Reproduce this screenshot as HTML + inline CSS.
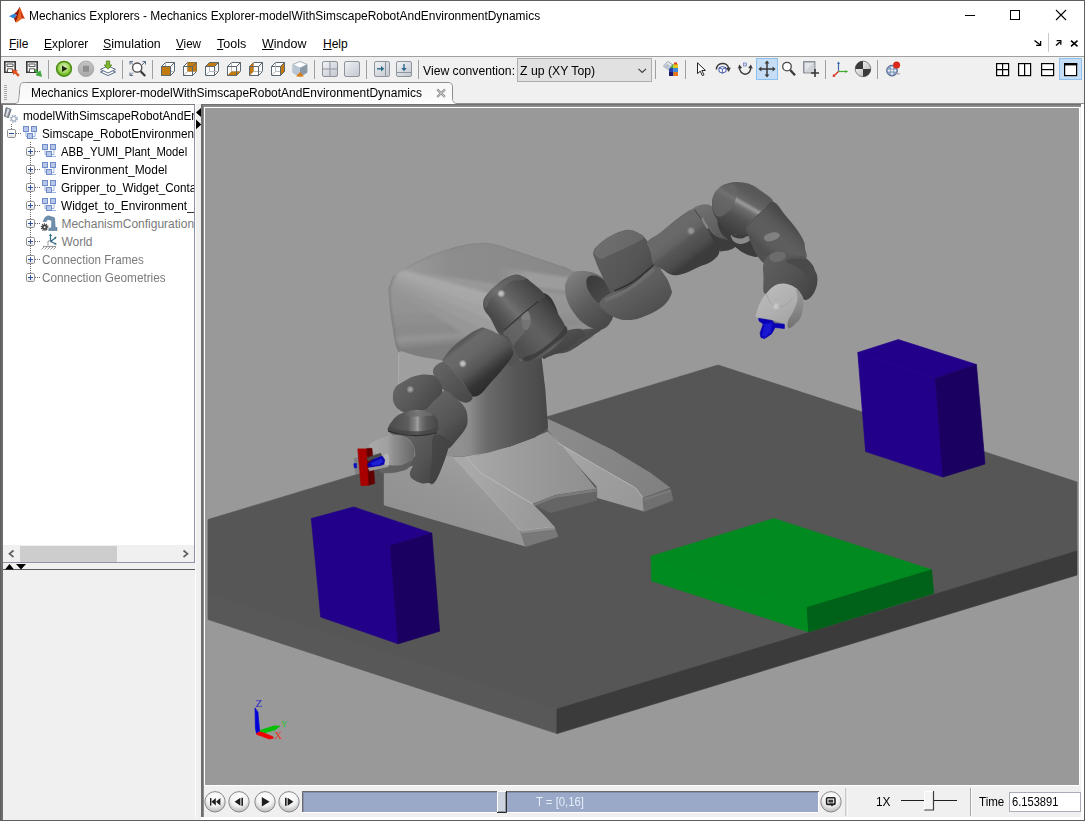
<!DOCTYPE html>
<html>
<head>
<meta charset="utf-8">
<title>Mechanics Explorers</title>
<style>
html,body{margin:0;padding:0;}
body{width:1085px;height:821px;position:relative;overflow:hidden;background:#f0f0f0;font-family:"Liberation Sans",sans-serif;font-size:12px;color:#000;}
.abs{position:absolute;}
.t{position:absolute;white-space:pre;line-height:14px;height:14px;transform-origin:0 50%;}
#titlebar{left:1px;top:1px;width:1083px;height:29px;background:#fff;}
#menubar{left:1px;top:30px;width:1083px;height:26px;background:#fff;}
#menuline{left:1px;top:56px;width:1083px;height:1px;background:#a0a0a0;}
#toolbar{left:1px;top:57px;width:1083px;height:47px;background:#f0f0f0;}
.sep{position:absolute;top:60px;width:1px;height:19px;background:#a0a0a0;}
u{text-decoration:underline;text-underline-offset:1px;}
/* tree */
#tree{left:3px;top:105px;width:191px;height:440px;background:#fff;overflow:hidden;}
.row{position:absolute;left:0;height:18px;}
.g{color:#7a7a7a;}
</style>
</head>
<body>
<!-- window border -->
<div class="abs" style="left:0;top:0;width:1085px;height:821px;background:#fff;"></div>
<div class="abs" style="left:0;top:0;width:1085px;height:1px;background:#5e5e5e;"></div>
<div class="abs" style="left:0;top:0;width:1px;height:821px;background:#5e5e5e;"></div>
<div class="abs" style="left:1084px;top:0;width:1px;height:821px;background:#5e5e5e;"></div>
<div class="abs" style="left:0;top:820px;width:1085px;height:1px;background:#5e5e5e;"></div>

<!-- TITLE BAR -->
<div id="titlebar" class="abs"></div>
<!--LOGO-->
<span class="t" id="title" style="left:29px;top:9px;transform:scaleX(0.994);">Mechanics Explorers - Mechanics Explorer-modelWithSimscapeRobotAndEnvironmentDynamics</span>
<!--WINCTRL-->

<!-- MENU BAR -->
<div id="menubar" class="abs"></div>
<span class="t" style="left:9px;top:37px;transform:scaleX(1.0);"><u>F</u>ile</span>
<span class="t" style="left:44px;top:37px;transform:scaleX(0.99);"><u>E</u>xplorer</span>
<span class="t" style="left:103px;top:37px;transform:scaleX(1.03);"><u>S</u>imulation</span>
<span class="t" style="left:176px;top:37px;transform:scaleX(0.97);"><u>V</u>iew</span>
<span class="t" style="left:217px;top:37px;transform:scaleX(1.045);"><u>T</u>ools</span>
<span class="t" style="left:262px;top:37px;transform:scaleX(1.04);"><u>W</u>indow</span>
<span class="t" style="left:323px;top:37px;transform:scaleX(1.0);"><u>H</u>elp</span>
<!--MENUICONS-->
<div id="menuline" class="abs"></div>

<!-- TOOLBAR -->
<div id="toolbar" class="abs"></div>
<!--TB-S-->
<svg class="abs" style="left:0;top:0" width="1085" height="104" viewBox="0 0 1085 104">
 <defs>
  <radialGradient id="gPlay" cx="0.5" cy="0.4" r="0.6"><stop offset="0" stop-color="#e4f6c8"/><stop offset="0.55" stop-color="#a4d860"/><stop offset="0.85" stop-color="#6cb828"/><stop offset="1" stop-color="#58a418"/></radialGradient>
  <linearGradient id="gStop" x1="0" y1="0" x2="0" y2="1"><stop offset="0" stop-color="#c4c4c4"/><stop offset="1" stop-color="#a8a8a8"/></linearGradient>
  <linearGradient id="gBtn" x1="0" y1="0" x2="1" y2="1"><stop offset="0" stop-color="#f4f5f7"/><stop offset="0.5" stop-color="#d9dce2"/><stop offset="1" stop-color="#c4c8cf"/></linearGradient>
  <linearGradient id="gTab" x1="0" y1="0" x2="0" y2="1"><stop offset="0" stop-color="#f7f7f9"/><stop offset="0.7" stop-color="#fbfbfc"/><stop offset="1" stop-color="#ffffff"/></linearGradient>
  <linearGradient id="gBall" x1="0" y1="0" x2="1" y2="1"><stop offset="0" stop-color="#ffffff"/><stop offset="1" stop-color="#b0b0b0"/></linearGradient>
  <g id="cube" fill="none" stroke="#5a6770" stroke-width="1">
   <path d="M0.5 4.5H9.5V13.5H0.5ZM0.5 4.5L4.5 0.5H13.5L9.5 4.5M13.5 0.5V9.5L9.5 13.5" fill="#fff"/>
   <path d="M4.5 0.5V9.5H13.5M4.5 9.5L0.5 13.5" stroke="#b4bcc2"/>
  </g>
 </defs>
 <!-- matlab logo -->
 <g>
  <path d="M9 16.2 L14.4 13.6 L17 15.2 L14 18.6 Z" fill="#2b86d9"/>
  <path d="M14.4 13.6 L16.8 11.6 L19.6 7 L20.2 11 L18 18 L15.6 22.4 L14 18.6 L17 15.2Z" fill="#8e1a0e"/>
  <path d="M19.6 7 C20.6 7.6 22.2 13 25 19 C23.2 17.8 22 18.4 20.8 19.4 C19 20.8 17.4 22.4 15.6 22.4 C17.6 19 18.8 12 19.6 7Z" fill="#e8641a"/>
  <path d="M20.2 9.2 C21 11.4 22.6 15.4 24.6 18.6 C23.4 18 22.4 18.2 21.6 18.8 C21.4 15.6 20.8 12 20.2 9.2Z" fill="#c8321e"/>
  <path d="M19.2 7.4L20 7.2L19.8 8.6Z" fill="#3a3f58"/>
 </g>
 <!-- window controls -->
 <g stroke="#000" stroke-width="1" fill="none">
  <path d="M965 15.5H975"/>
  <rect x="1010.5" y="10.5" width="9" height="9"/>
  <path d="M1056 10L1066 20M1066 10L1056 20" stroke-width="1.1"/>
 </g>
 <!-- menu right mini icons -->
 <g stroke="#000" stroke-width="1.4" fill="none">
  <path d="M1034.5 40.5L1040 44.8"/><path d="M1040.6 41V45.4H1036.2" stroke-width="1.3"/>
  <path d="M1056 45.5L1060 42"/><path d="M1056.6 40.6H1060.8V44.8" stroke-width="1.3"/>
  <path d="M1071 40.6L1077.5 46.4M1077.5 40.6L1071 46.4" stroke-width="1.5"/>
 </g>
 <rect x="1048" y="33" width="1" height="19" fill="#c8c8c8"/>
 <!-- separators -->
 <g fill="#a0a0a0">
  <rect x="48" y="60" width="1" height="19"/><rect x="122" y="60" width="1" height="19"/><rect x="152" y="60" width="1" height="19"/>
  <rect x="314" y="60" width="1" height="19"/><rect x="366" y="60" width="1" height="19"/><rect x="418" y="60" width="1" height="19"/>
  <rect x="655" y="60" width="1" height="19"/><rect x="685" y="60" width="1" height="19"/><rect x="825" y="60" width="1" height="19"/><rect x="877" y="60" width="1" height="19"/>
 </g>
 <!-- icon 1,2: model blocks with arrows -->
 <g id="mdl1">
  <path d="M4.8 61.8H15.2V72.2H4.8Z" fill="#f4f4f4" stroke="#3a3a3a" stroke-width="1.6"/>
  <path d="M7 64H13V66.5H7Z" fill="#fff" stroke="#5a5a5a" stroke-width="1"/>
  <path d="M7.5 72V68.8H12.5V72" fill="#fff" stroke="#5a5a5a" stroke-width="1"/>
  <path d="M12.2 69.8L17.4 70.6L16.2 71.8L19.4 75L18 76.4L14.8 73.2L13.4 74.6Z" fill="#e8541a" stroke="#c03a10" stroke-width="0.5"/>
 </g>
 <g>
  <path d="M26.8 61.8H37.2V72.2H26.8Z" fill="#f4f4f4" stroke="#3a3a3a" stroke-width="1.6"/>
  <path d="M29 64H35V66.5H29Z" fill="#fff" stroke="#5a5a5a" stroke-width="1"/>
  <path d="M29.5 72V68.8H34.5V72" fill="#fff" stroke="#5a5a5a" stroke-width="1"/>
  <path d="M34 70.6L35.6 69.2L38.6 72.2L40.2 70.8L41.6 76.4L36 75L37.4 73.6Z" fill="#3fae3a" stroke="#228a24" stroke-width="0.5"/>
 </g>
 <!-- play / stop -->
 <circle cx="64" cy="68.8" r="7.4" fill="url(#gPlay)" stroke="#4a8c14" stroke-width="1.5"/>
 <path d="M62 65.6L67.4 68.8L62 72Z" fill="#1e2a10"/>
 <circle cx="86" cy="68.8" r="7.8" fill="url(#gStop)" stroke="#a2a2a2" stroke-width="0.8"/>
 <rect x="83" y="65.8" width="6" height="6" fill="#8e8e8e"/>
 <!-- layers / update -->
 <g>
  <path d="M100.5 72L108 68.6L115.5 72L108 75.6Z" fill="#fff" stroke="#5a6e86" stroke-width="1"/>
  <path d="M100.5 69.4L108 66L115.5 69.4L108 73Z" fill="#fff" stroke="#5a6e86" stroke-width="1"/>
  <path d="M106.4 61H109.6V65H111.8L108 69.2L104.2 65H106.4Z" fill="#7fb82e" stroke="#4c8216" stroke-width="0.8"/>
 </g>
 <!-- zoom fit -->
 <g fill="none">
  <path d="M130 61.5L133.5 65M130 61.5H133M130 61.5V64.5M145.5 61.5L142 65M145.5 61.5H142.5M145.5 61.5V64.5M130 75.5L133 72.5M130 75.5H133M130 75.5V72.5" stroke="#5a6e86" stroke-width="1"/>
  <circle cx="137.2" cy="67.6" r="4.6" fill="#fff" stroke="#4a4a4a" stroke-width="1.3"/>
  <path d="M140.6 71.2L145.2 76" stroke="#3a3a3a" stroke-width="2.2"/>
 </g>
 <!-- cubes -->
 <use href="#cube" x="161" y="62"/><path d="M161.5 66.5H170.5V75.5H161.5Z" fill="#c27a0e" stroke="#5a6770"/>
 <use href="#cube" x="183" y="62"/><path d="M187.5 62.5H196.5V71.5H187.5Z" fill="#c27a0e"/><path d="M183.5 66.5H192.5V75.5H183.5ZM192.5 66.5L196.5 62.5M183.5 66.5L187.5 62.5" fill="none" stroke="#5a6770"/>
 <use href="#cube" x="205" y="62"/><path d="M205.5 66.5L209.5 62.5H218.5L214.5 66.5Z" fill="#c27a0e" stroke="#5a6770"/>
 <use href="#cube" x="227" y="62"/><path d="M227.5 75.5L231.5 71.5H240.5L236.5 75.5Z" fill="#c27a0e"/><path d="M227.5 66.5H236.5V75.5H227.5Z" fill="none" stroke="#5a6770"/>
 <use href="#cube" x="249" y="62"/><path d="M249.5 66.5L253.5 62.5V71.5L249.5 75.5Z" fill="#c27a0e"/><path d="M249.5 66.5H258.5V75.5H249.5Z" fill="none" stroke="#5a6770"/>
 <use href="#cube" x="271" y="62"/><path d="M280.5 66.5L284.5 62.5V71.5L280.5 75.5Z" fill="#c27a0e" stroke="#5a6770"/>
 <!-- iso cube -->
 <g>
  <path d="M300 61.5L307 64.5V72.5L300 76.5L293 72.5V64.5Z" fill="#dfe6ee" stroke="#8a97a6" stroke-width="0.8"/>
  <path d="M300 61.5L307 64.5L300 68L293 64.5Z" fill="#fdfdfd" stroke="#9aa6b4" stroke-width="0.6"/>
  <path d="M300 68V76.5L293 72.5V64.5Z" fill="#b9c6d6"/>
  <path d="M300 68V76.5L307 72.5V64.5Z" fill="#8c99a8"/>
  <path d="M296 76.5L300 72L304 76.5Z" fill="#d97a14"/>
 </g>
 <!-- grid / single -->
 <rect x="322.5" y="61.5" width="15" height="15" rx="1.5" fill="url(#gBtn)" stroke="#8e949c"/>
 <path d="M330 62V76M323 69H337" stroke="#8e949c" stroke-width="1"/>
 <rect x="344.5" y="61.5" width="15" height="15" rx="1.5" fill="url(#gBtn)" stroke="#8e949c"/>
 <!-- arrows right/down -->
 <rect x="374.5" y="61.5" width="15" height="15" rx="1.5" fill="url(#gBtn)" stroke="#8e949c"/>
 <path d="M385.5 62V76" stroke="#8e949c"/><path d="M377 68.8H383" stroke="#2a6a8a" stroke-width="1.4"/><path d="M381 66L384.2 68.8L381 71.6Z" fill="#2a6a8a"/>
 <rect x="396.5" y="61.5" width="15" height="15" rx="1.5" fill="url(#gBtn)" stroke="#8e949c"/>
 <path d="M397 72.5H411" stroke="#8e949c"/><path d="M404 64V70" stroke="#2a6a8a" stroke-width="1.4"/><path d="M401.2 68L404 71.2L406.8 68Z" fill="#2a6a8a"/>
 <!-- combo -->
 <rect x="517.5" y="58.5" width="134" height="23" fill="#e1e1e1" stroke="#adadad"/>
 <path d="M638.5 68.8L642.2 72.4L646 68.8" fill="none" stroke="#3a3a3a" stroke-width="1.1"/>
 <!-- color icon -->
 <g>
  <rect x="669" y="64" width="4.5" height="4" fill="#3fae3a"/><rect x="673.5" y="64" width="4.5" height="4" fill="#e8c81a"/>
  <rect x="669" y="68" width="4.5" height="4" fill="#2a3fae"/><rect x="673.5" y="68" width="4.5" height="4" fill="#3a8ad9"/>
  <rect x="669" y="72" width="4.5" height="4" fill="#1a1a6a"/><rect x="673.5" y="72" width="4.5" height="4" fill="#e8741a"/>
  <rect x="674" y="62.5" width="3" height="2" fill="#d93a2a"/>
  <path d="M663.4 66.2L667.6 61.4L672.6 64.6L668.4 69.6Z" fill="#e4e8ee" stroke="#8a97a6" stroke-width="0.8"/>
  <path d="M664.6 66.4L666.8 63.8L670.2 66L668.2 68.6Z" fill="#b4c0ce"/>
 </g>
 <!-- pointer -->
 <path d="M697.5 62.8V73.6L700.2 71.2L702.4 75.6L704 74.8L701.8 70.6L705.4 70.4Z" fill="#fff" stroke="#222" stroke-width="1"/>
 <!-- rotate -->
 <g fill="none">
  <path d="M716.4 69.6C716.4 61.6 728 61.4 728.6 68.6" stroke="#3a3a3a" stroke-width="1.5"/>
  <path d="M726 68L728.8 72L730.8 67.4Z" fill="#3a3a3a"/>
  <path d="M722.4 66.6L726 67.8V71.6L722.4 73.2L719 71.6V67.8Z" fill="#fff" stroke="#2a3f9e" stroke-width="0.9"/>
  <path d="M719 67.8L722.4 69.2L726 67.8M722.4 69.2V73.2" stroke="#2a3f9e" stroke-width="0.8"/>
 </g>
 <!-- roll -->
 <g fill="none">
  <path d="M739.6 66.6C739 76.8 751.6 76.6 750.6 66.8" stroke="#3a3a3a" stroke-width="1.5"/>
  <path d="M737.8 68.6L739.4 64.4L742.2 68Z M748.2 68L750.8 64.4L752.8 68.6Z" fill="#3a3a3a"/>
  <rect x="743.5" y="63" width="3" height="3" fill="#c8d4f0" stroke="#6a7ab8" stroke-width="0.7"/>
 </g>
 <!-- pan selected -->
 <rect x="756.5" y="58.5" width="21" height="21" fill="#c5def5" stroke="#8cc0ee"/>
 <g stroke="#3a3a3a" stroke-width="1.5" fill="none"><path d="M767 62V76M760 69H774"/></g>
 <path d="M764.6 63.4L767 60.4L769.4 63.4ZM764.6 74.6L767 77.6L769.4 74.6ZM761.4 66.6L758.4 69L761.4 71.4ZM772.6 66.6L775.6 69L772.6 71.4Z" fill="#3a3a3a"/>
 <!-- zoom -->
 <circle cx="787" cy="66.6" r="4.3" fill="#fff" stroke="#4a4a4a" stroke-width="1.3"/>
 <path d="M790.2 70L795 75.2" stroke="#3a3a3a" stroke-width="2.4"/>
 <!-- zoom box -->
 <rect x="803.8" y="61.8" width="11" height="11" fill="#e2e5ea" stroke="#6a7079" stroke-width="1.1"/>
 <path d="M804.4 71.8L814 62.4H814.4V72.4H804.4Z" fill="#cfd3da"/>
 <path d="M815 69V77M811 73H819" stroke="#3a3a3a" stroke-width="1.6"/>
 <!-- axes -->
 <g fill="none">
  <path d="M838.5 62V71.5" stroke="#3f6aa8" stroke-width="1.2"/><path d="M837 64L838.5 61.4L840 64Z" fill="#3f6aa8"/>
  <path d="M838.5 71.5H846" stroke="#3fae2a" stroke-width="1.2"/><path d="M845.4 70L848.2 71.5L845.4 73Z" fill="#3fae2a"/>
  <path d="M838.5 71.5L834 75.8" stroke="#d9301a" stroke-width="1.2"/><path d="M833 74L832.6 77L835.6 76.4Z" fill="#d9301a"/>
 </g>
 <!-- CG ball -->
 <circle cx="863" cy="68.9" r="7.8" fill="url(#gBall)" stroke="#6a6a6a" stroke-width="0.8"/>
 <path d="M863 68.9V61.1A7.8 7.8 0 0 0 855.2 68.9Z" fill="#3a3a3a"/><path d="M863 68.9V76.7A7.8 7.8 0 0 0 870.8 68.9Z" fill="#3a3a3a"/>
 <!-- movie -->
 <g>
  <circle cx="892" cy="70.6" r="5.4" fill="#8aa0c0" stroke="#4a5f86" stroke-width="0.9"/>
  <circle cx="892" cy="70.6" r="1" fill="#fff"/><circle cx="892" cy="67.6" r="1.2" fill="#e8eef8"/><circle cx="892" cy="73.6" r="1.2" fill="#e8eef8"/><circle cx="889" cy="70.6" r="1.2" fill="#e8eef8"/><circle cx="895" cy="70.6" r="1.2" fill="#e8eef8"/>
  <path d="M896 73.4C897.6 74.6 898.6 73.4 899.8 73.8" stroke="#8a8a8a" stroke-width="1" fill="none"/>
  <circle cx="896.6" cy="65" r="3.5" fill="#d9281a"/>
 </g>
 <!-- layout icons -->
 <g fill="#fff" stroke="#000" stroke-width="1.2">
  <rect x="996.6" y="63.6" width="12" height="12"/><path d="M1002.6 63.6V75.6M996.6 69.6H1008.6" fill="none"/>
  <rect x="1018.6" y="63.6" width="12" height="12"/><path d="M1024.6 63.6V75.6" fill="none"/>
  <rect x="1041.6" y="63.6" width="12" height="12"/><path d="M1041.6 69.6H1053.6" fill="none"/>
 </g>
 <rect x="1059.5" y="58.5" width="22" height="21" fill="#c5def5" stroke="#8cc0ee"/>
 <rect x="1064.6" y="63.6" width="12" height="12" fill="#fff" stroke="#000" stroke-width="1.2"/><rect x="1064" y="63" width="13.2" height="2.4" fill="#000"/>
 <!-- tab -->
 <g fill="#a8a8a8"><rect x="4" y="85" width="3" height="1"/><rect x="4" y="87" width="3" height="1"/><rect x="4" y="89" width="3" height="1"/><rect x="4" y="91" width="3" height="1"/><rect x="4" y="93" width="3" height="1"/><rect x="4" y="95" width="3" height="1"/><rect x="4" y="97" width="3" height="1"/><rect x="4" y="99" width="3" height="1"/></g>
 <path d="M1 103.5H15C18.5 103.5 18.5 101 19 98L20 87C20.3 83.6 21.5 82.5 24.5 82.5H448C451 82.5 452.5 84 452.5 87V98C452.5 101.5 453.5 103.5 457 103.5H1084" fill="none" stroke="#8e8e8e" stroke-width="1"/>
 <path d="M15 104C18.8 104 19 101 19.5 98L20.5 87C20.8 84 21.8 83 24.5 83H448C450.6 83 452 84.4 452 87V98C452 101.8 453.2 104 457 104Z" fill="url(#gTab)"/>
 <path d="M437.2 89.4L445 97M445 89.4L437.2 97" stroke="#8a8a8a" stroke-width="2.2" fill="none"/>
 <path d="M437.2 89.4L445 97M445 89.4L437.2 97" stroke="#e8e8e8" stroke-width="0.7" fill="none"/>
</svg>
<span class="t" style="left:423px;top:64px;transform:scaleX(1.017);">View convention:</span>
<span class="t" style="left:520px;top:64px;transform:scaleX(1.02);">Z up (XY Top)</span>
<span class="t" style="left:31px;top:86px;transform:scaleX(0.997);">Mechanics Explorer-modelWithSimscapeRobotAndEnvironmentDynamics</span>
<!--TB-E-->

<!-- LEFT PANEL -->
<!--LEFT-S-->
<div class="abs" style="left:1px;top:104px;width:200px;height:716px;background:#f0f0f0;"></div>
<div class="abs" style="left:1px;top:104px;width:2px;height:716px;background:#6d6d6d;"></div>
<div class="abs" style="left:1px;top:104px;width:194px;height:1px;background:#7a7a7a;"></div>
<div class="abs" style="left:194px;top:105px;width:1px;height:458px;background:#8e94a3;"></div>
<div class="abs" style="left:3px;top:562px;width:192px;height:1px;background:#8e94a3;"></div>
<div class="abs" style="left:195px;top:104px;width:1px;height:714px;background:#fcfcfc;"></div>
<div class="abs" style="left:3px;top:569px;width:192px;height:1px;background:#5a5a5a;"></div>
<div id="tree" class="abs">
<svg class="abs" style="left:0;top:0" width="191" height="440" viewBox="3 105 191 440">
 <defs>
  <g id="hier">
   <path d="M3 5.5V10.5H6M12 5.5V10.5H10M10 12.5H14" fill="none" stroke="#9db3e0" stroke-width="1"/>
   <rect x="0.5" y="0.5" width="5" height="5" fill="#b7c7ea" stroke="#6f8bc9"/>
   <rect x="8.5" y="0.5" width="5" height="5" fill="#b7c7ea" stroke="#6f8bc9"/>
   <rect x="4.5" y="7.5" width="5" height="5" fill="#b7c7ea" stroke="#6f8bc9"/>
  </g>
  <g id="plus">
   <rect x="0.5" y="0.5" width="8" height="8" rx="1.2" fill="#fff" stroke="#8f8f8f"/>
   <rect x="1.5" y="5.5" width="6" height="2.5" fill="#e6e6e6"/>
   <path d="M2 4.5H7M4.5 2V7" stroke="#2c4f9e" stroke-width="1" fill="none"/>
  </g>
  <g id="minus">
   <rect x="0.5" y="0.5" width="8" height="8" rx="1.2" fill="#fff" stroke="#8f8f8f"/>
   <rect x="1.5" y="5.5" width="6" height="2.5" fill="#e6e6e6"/>
   <path d="M2 4.5H7" stroke="#2c4f9e" stroke-width="1" fill="none"/>
  </g>
 </defs>
 <!-- dotted connectors -->
 <g stroke="#6a6a6a" stroke-width="1" stroke-dasharray="1 1" fill="none">
  <path d="M11.5 124V129"/>
  <path d="M16 133.5H22"/>
  <path d="M30.5 142V273"/>
  <path d="M35 151.5H41M35 169.5H41M35 187.5H41M35 205.5H41M35 223.5H41M35 241.5H41M35 259.5H41M35 277.5H41"/>
 </g>
 <!-- row0 icon: pen + gear -->
 <g>
  <path d="M6.2 107.6 L11.2 109.4 L8.4 117.6 L4.4 116.2 Z" fill="#8d949c" stroke="#5c636b" stroke-width="0.8"/>
  <path d="M7.6 108.6 L9.4 109.3 L7 116.4 L5.6 115.9Z" fill="#dfe3e8"/>
  <circle cx="13.8" cy="118.8" r="3.1" fill="none" stroke="#a9b6c6" stroke-width="2.2" stroke-dasharray="1.4 1.05"/>
  <circle cx="13.8" cy="118.8" r="2.2" fill="#fff" stroke="#8c99aa" stroke-width="0.9"/>
 </g>
 <use href="#minus" x="7" y="129"/>
 <use href="#hier" x="23" y="126"/>
 <use href="#plus" x="26" y="147"/><use href="#hier" x="42" y="144"/>
 <use href="#plus" x="26" y="165"/><use href="#hier" x="42" y="162"/>
 <use href="#plus" x="26" y="183"/><use href="#hier" x="42" y="180"/>
 <use href="#plus" x="26" y="201"/><use href="#hier" x="42" y="198"/>
 <use href="#plus" x="26" y="219"/>
 <use href="#plus" x="26" y="237"/>
 <use href="#plus" x="26" y="255"/>
 <use href="#plus" x="26" y="273"/>
 <!-- mechanism icon -->
 <g>
  <path d="M43.2 221.5 L45 217.5 L48 215.8 L54.5 217.8 L55.2 227.5 L57 227.5 L57 230.5 L48.6 230.5 L49 228.6 L51.6 227.5 L51.8 220.4 L47.6 219.2 L46.2 221.6 Z" fill="#6f90ad" stroke="#4f7190" stroke-width="0.6"/>
  <circle cx="44.6" cy="227.2" r="2.6" fill="#3c3c3c"/>
  <circle cx="44.6" cy="227.2" r="3.2" fill="none" stroke="#3c3c3c" stroke-width="1.3" stroke-dasharray="1.1 0.9"/>
  <circle cx="44.6" cy="227.2" r="1" fill="#fff"/>
 </g>
 <!-- world icon -->
 <g fill="none">
  <path d="M48 245.5V241H52.5" stroke="#9a9a9a" stroke-width="1"/>
  <path d="M43 246.5H56" stroke="#9a9a9a" stroke-width="1.2"/>
  <path d="M44 247 L41.5 249.5M47 247L44.5 249.5M50 247L47.5 249.5M53 247L50.5 249.5M56 247L53.5 249.5" stroke="#9a9a9a" stroke-width="1"/>
  <path d="M50.5 241.5V234.5M50.5 241.5L56 237.5M50.5 241.5L56 244" stroke="#2f6a86" stroke-width="1.2"/>
  <path d="M49 236L50.5 233.4L52 236ZM54.2 237L56.6 236.8L55.6 239ZM54.2 244.4L56.8 244.6L55.6 242.4Z" fill="#2f6a86" stroke="none"/>
 </g>
</svg>
<span class="t" style="left:20px;top:4px;transform:scaleX(0.986);">modelWithSimscapeRobotAndEnvironmentDynamics</span>
<span class="t" style="left:38.5px;top:22px;transform:scaleX(0.978);">Simscape_RobotEnvironmentDynamics</span>
<span class="t" style="left:58.4px;top:40px;transform:scaleX(0.941);">ABB_YUMI_Plant_Model</span>
<span class="t" style="left:58.4px;top:58px;transform:scaleX(0.995);">Environment_Model</span>
<span class="t" style="left:58.4px;top:76px;transform:scaleX(0.97);">Gripper_to_Widget_Contact</span>
<span class="t" style="left:58.4px;top:94px;transform:scaleX(0.985);">Widget_to_Environment_Contact</span>
<span class="t g" style="left:58.4px;top:112px;transform:scaleX(1.0);">MechanismConfiguration</span>
<span class="t g" style="left:58.4px;top:130px;transform:scaleX(1.0);">World</span>
<span class="t g" style="left:39px;top:148px;transform:scaleX(0.972);">Connection Frames</span>
<span class="t g" style="left:39px;top:166px;transform:scaleX(0.981);">Connection Geometries</span>
</div>
<!-- h scrollbar -->
<div class="abs" style="left:3px;top:546px;width:191px;height:16px;background:#f0f0f0;"></div>
<div class="abs" style="left:20px;top:546px;width:97px;height:16px;background:#cdcdcd;"></div>
<svg class="abs" style="left:3px;top:546px" width="191" height="16" viewBox="3 546 191 16"><path d="M13.5 550.5L9.5 553.8L13.5 557" fill="none" stroke="#606060" stroke-width="1.7"/><path d="M183.5 550.5L187.5 553.8L183.5 557" fill="none" stroke="#606060" stroke-width="1.7"/></svg>
<!-- collapse arrows -->
<svg class="abs" style="left:3px;top:563px" width="30" height="7" viewBox="3 563 30 7"><path d="M5 569.5L9.5 564L14 569.5Z M16 564L26 564L21 569.5Z" fill="#000"/></svg>
<!-- divider arrows -->
<svg class="abs" style="left:196px;top:106px" width="6" height="24" viewBox="196 106 6 24"><path d="M201.3 107.8L196 112.5L201.3 117.2Z M196 119.6L201.3 124.4L196 129.2Z" fill="#000"/></svg>
<!--LEFT-E-->

<!-- 3D VIEW -->
<!--VIEW-S-->
<!-- frame -->
<div class="abs" style="left:201px;top:104px;width:883px;height:716px;background:#f0f0f0;"></div>
<div class="abs" style="left:201px;top:104px;width:881px;height:1px;background:#6e6e6e;"></div>
<div class="abs" style="left:202px;top:105px;width:879px;height:2px;background:#8a8a8a;"></div>
<div class="abs" style="left:201px;top:104px;width:2px;height:715px;background:#6e6e6e;"></div>
<div class="abs" style="left:203px;top:105px;width:1px;height:713px;background:#8c8c8c;"></div>
<div class="abs" style="left:204px;top:107px;width:877px;height:679px;background:#fff;"></div>
<div class="abs" style="left:1081px;top:104px;width:3px;height:716px;background:#fff;"></div>
<div class="abs" style="left:1080px;top:108px;width:1px;height:677px;background:#f2f2f2;"></div>
<div class="abs" style="left:201px;top:817px;width:883px;height:3px;background:#fff;"></div>
<svg class="abs" id="scene" style="left:205px;top:108px" width="874" height="677" viewBox="205 108 874 677">
<rect x="205" y="108" width="874" height="677" fill="#999999"/>
<!--SC-S-->
<defs><linearGradient id="gRF" gradientUnits="userSpaceOnUse" x1="560" y1="440" x2="640" y2="500"><stop offset="0" stop-color="#8c8c8c"/><stop offset="1" stop-color="#868686"/></linearGradient><linearGradient id="gRFt" gradientUnits="userSpaceOnUse" x1="550" y1="430" x2="670" y2="490"><stop offset="0" stop-color="#8c8c8c"/><stop offset="1" stop-color="#808080"/></linearGradient><linearGradient id="gRFi" gradientUnits="userSpaceOnUse" x1="560" y1="440" x2="640" y2="500"><stop offset="0" stop-color="#aaaaaa"/><stop offset="0.5" stop-color="#9e9e9e"/><stop offset="1" stop-color="#989898"/></linearGradient><linearGradient id="gSk" gradientUnits="userSpaceOnUse" x1="470" y1="470" x2="600" y2="470"><stop offset="0" stop-color="#a8a8a8"/><stop offset="0.4" stop-color="#9c9c9c"/><stop offset="1" stop-color="#8e8e8e"/></linearGradient><linearGradient id="gLFl" gradientUnits="userSpaceOnUse" x1="400" y1="520" x2="440" y2="440"><stop offset="0" stop-color="#909090"/><stop offset="0.6" stop-color="#979797"/><stop offset="1" stop-color="#a0a0a0"/></linearGradient><linearGradient id="gLFr" gradientUnits="userSpaceOnUse" x1="470" y1="480" x2="540" y2="500"><stop offset="0" stop-color="#a8a8a8"/><stop offset="1" stop-color="#9a9a9a"/></linearGradient><linearGradient id="gCol" gradientUnits="userSpaceOnUse" x1="462" y1="400" x2="548" y2="400"><stop offset="0" stop-color="#909090"/><stop offset="0.09" stop-color="#8c8c8c"/><stop offset="0.2" stop-color="#787878"/><stop offset="0.3" stop-color="#6a6a6a"/><stop offset="0.465" stop-color="#606060"/><stop offset="0.63" stop-color="#565656"/><stop offset="0.85" stop-color="#4e4e4e"/><stop offset="1" stop-color="#464646"/></linearGradient><clipPath id="cTor"><path d="M397.6 350.3C394.9 344.0 394.9 342.5 392.6 327.8C390.3 313.1 389.5 306.9 388.8 295.2C388.1 283.5 388.4 289.6 390.1 283.9C391.8 278.2 391.1 278.2 395.1 273.9C399.1 269.6 397.1 271.9 405.1 267.6C413.1 263.3 414.4 262.3 425.1 257.6C435.8 252.9 434.5 253.6 445.2 250.1C455.9 246.6 455.8 246.5 465.2 244.6C474.6 242.7 473.6 243.4 480.3 243.1C487.0 242.8 482.3 241.8 490.3 243.3C498.3 244.8 499.0 245.3 510.4 248.8C521.8 252.3 520.9 252.3 532.9 256.3C544.9 260.3 545.5 260.4 555.5 263.9C565.5 267.4 561.8 264.4 570.5 269.4C579.2 274.4 581.3 273.8 588.0 282.7C594.7 291.6 593.6 290.0 595.6 302.7C597.6 315.4 599.0 319.6 595.6 330.3C592.2 341.0 590.4 337.5 583.0 342.8C575.6 348.1 576.7 347.0 568.0 350.3C559.3 353.6 557.2 353.6 550.5 355.3C543.8 357.0 553.6 355.2 542.9 356.6C532.2 358.0 528.4 358.1 510.4 360.4C492.4 362.7 493.4 365.4 475.3 365.4C457.2 365.4 457.4 362.7 442.7 360.4C428.0 358.1 430.8 358.9 420.1 356.6C409.4 354.3 408.6 353.3 402.6 351.6C396.6 349.9 400.3 356.6 397.6 350.3Z"/></clipPath><filter id="fB" x="-5%" y="-5%" width="110%" height="110%"><feGaussianBlur stdDeviation="1.6"/></filter><linearGradient id="gTop" gradientUnits="userSpaceOnUse" x1="405" y1="0" x2="575" y2="0"><stop offset="0" stop-color="#9a9a9a"/><stop offset="0.27" stop-color="#8d8d8d"/><stop offset="1" stop-color="#888888"/></linearGradient><linearGradient id="gW0" gradientUnits="userSpaceOnUse" x1="389" y1="0" x2="575" y2="0"><stop offset="0" stop-color="#a9a9a9"/><stop offset="0.62" stop-color="#a9a9a9"/><stop offset="0.85" stop-color="#a9a9a9" stop-opacity="0"/></linearGradient><linearGradient id="gW1" gradientUnits="userSpaceOnUse" x1="389" y1="0" x2="575" y2="0"><stop offset="0" stop-color="#a7a7a7"/><stop offset="0.62" stop-color="#a7a7a7"/><stop offset="0.85" stop-color="#a7a7a7" stop-opacity="0"/></linearGradient><linearGradient id="gW2" gradientUnits="userSpaceOnUse" x1="389" y1="0" x2="575" y2="0"><stop offset="0" stop-color="#a2a2a2"/><stop offset="0.62" stop-color="#a2a2a2"/><stop offset="0.85" stop-color="#a2a2a2" stop-opacity="0"/></linearGradient><linearGradient id="gW3" gradientUnits="userSpaceOnUse" x1="389" y1="0" x2="575" y2="0"><stop offset="0" stop-color="#9c9c9c"/><stop offset="0.62" stop-color="#9c9c9c"/><stop offset="0.85" stop-color="#9c9c9c" stop-opacity="0"/></linearGradient><linearGradient id="gW4" gradientUnits="userSpaceOnUse" x1="389" y1="0" x2="575" y2="0"><stop offset="0" stop-color="#979797"/><stop offset="0.62" stop-color="#979797"/><stop offset="0.85" stop-color="#979797" stop-opacity="0"/></linearGradient><linearGradient id="gRE" gradientUnits="userSpaceOnUse" x1="498" y1="0" x2="528" y2="0"><stop offset="0" stop-color="#a0a0a0" stop-opacity="0"/><stop offset="1" stop-color="#a0a0a0" stop-opacity="0.85"/></linearGradient><linearGradient id="gUnd" gradientUnits="userSpaceOnUse" x1="560" y1="340" x2="575" y2="360"><stop offset="0" stop-color="#5a5a5a"/><stop offset="1" stop-color="#3e3e3e"/></linearGradient><linearGradient id="gUnd2" gradientUnits="userSpaceOnUse" x1="560" y1="335" x2="570" y2="355"><stop offset="0" stop-color="#505050"/><stop offset="1" stop-color="#3e3e3e"/></linearGradient><linearGradient id="gR1" gradientUnits="userSpaceOnUse" x1="560" y1="270" x2="610" y2="330"><stop offset="0" stop-color="#8a8a8a"/><stop offset="0.25" stop-color="#757575"/><stop offset="0.55" stop-color="#5d5d5d"/><stop offset="1" stop-color="#434343"/></linearGradient><linearGradient id="gR1h" gradientUnits="userSpaceOnUse" x1="585" y1="275" x2="610" y2="300"><stop offset="0" stop-color="#393939"/><stop offset="1" stop-color="#4b4b4b"/></linearGradient><linearGradient id="gR3" gradientUnits="userSpaceOnUse" x1="600" y1="250" x2="650" y2="285"><stop offset="0" stop-color="#5d5d5d"/><stop offset="0.6" stop-color="#555555"/><stop offset="1" stop-color="#474747"/></linearGradient><linearGradient id="gR3c" gradientUnits="userSpaceOnUse" x1="600" y1="235" x2="640" y2="260"><stop offset="0" stop-color="#6f6f6f"/><stop offset="1" stop-color="#656565"/></linearGradient><linearGradient id="gR2" gradientUnits="userSpaceOnUse" x1="620" y1="280" x2="650" y2="325"><stop offset="0" stop-color="#676767"/><stop offset="0.5" stop-color="#595959"/><stop offset="1" stop-color="#4b4b4b"/></linearGradient><linearGradient id="gR4" gradientUnits="userSpaceOnUse" x1="667.4" y1="224.3" x2="693.7" y2="259.4"><stop offset="0" stop-color="#5e5e5e"/><stop offset="0.08" stop-color="#6a6a6a"/><stop offset="0.3" stop-color="#696969"/><stop offset="0.48" stop-color="#626262"/><stop offset="0.56" stop-color="#575757"/><stop offset="0.8" stop-color="#4e4e4e"/><stop offset="0.93" stop-color="#444444"/><stop offset="1" stop-color="#3c3c3c"/></linearGradient><radialGradient id="gH1" gradientUnits="userSpaceOnUse" cx="691.0" cy="230.9" r="4.5"><stop offset="0" stop-color="#a4a4a4"/><stop offset="0.35" stop-color="#a4a4a4"/><stop offset="1" stop-color="#a4a4a400"/></radialGradient><linearGradient id="gR5" gradientUnits="userSpaceOnUse" x1="700" y1="205" x2="730" y2="250"><stop offset="0" stop-color="#717171"/><stop offset="0.5" stop-color="#616161"/><stop offset="1" stop-color="#4f4f4f"/></linearGradient><linearGradient id="gR6" gradientUnits="userSpaceOnUse" x1="736.5" y1="182.3" x2="707.1" y2="233.5"><stop offset="0" stop-color="#585858"/><stop offset="0.1" stop-color="#5e5e5e"/><stop offset="0.2" stop-color="#686868"/><stop offset="0.255" stop-color="#9c9c9c"/><stop offset="0.33" stop-color="#6c6c6c"/><stop offset="0.5" stop-color="#525252"/><stop offset="0.75" stop-color="#404040"/><stop offset="1" stop-color="#383838"/></linearGradient><linearGradient id="gR7" gradientUnits="userSpaceOnUse" x1="748.7" y1="235.9" x2="773.9" y2="207.2"><stop offset="0" stop-color="#505050"/><stop offset="0.2" stop-color="#5c5c5c"/><stop offset="0.5" stop-color="#5e5e5e"/><stop offset="0.75" stop-color="#585858"/><stop offset="1" stop-color="#4a4a4a"/></linearGradient><linearGradient id="gR8" gradientUnits="userSpaceOnUse" x1="770" y1="265" x2="815" y2="295"><stop offset="0" stop-color="#5c5c5c"/><stop offset="0.5" stop-color="#525252"/><stop offset="1" stop-color="#424242"/></linearGradient><linearGradient id="gR9" gradientUnits="userSpaceOnUse" x1="770" y1="285" x2="795" y2="325"><stop offset="0" stop-color="#bababa"/><stop offset="0.5" stop-color="#b0b0b0"/><stop offset="1" stop-color="#a2a2a2"/></linearGradient><linearGradient id="gR9s" gradientUnits="userSpaceOnUse" x1="795" y1="295" x2="800" y2="330"><stop offset="0" stop-color="#969696"/><stop offset="0.5" stop-color="#848484"/><stop offset="1" stop-color="#6c6c6c"/></linearGradient><radialGradient id="gH2" gradientUnits="userSpaceOnUse" cx="776.1" cy="306.3" r="4"><stop offset="0" stop-color="#dadada"/><stop offset="0.35" stop-color="#dadada"/><stop offset="1" stop-color="#dadada00"/></radialGradient><linearGradient id="gL1u" gradientUnits="userSpaceOnUse" x1="504.2" y1="330.8" x2="543.1" y2="295.6"><stop offset="0" stop-color="#484848"/><stop offset="0.2" stop-color="#585858"/><stop offset="0.4" stop-color="#707070"/><stop offset="0.55" stop-color="#606060"/><stop offset="0.8" stop-color="#505050"/><stop offset="1" stop-color="#444444"/></linearGradient><radialGradient id="gH3" gradientUnits="userSpaceOnUse" cx="501.2" cy="293.6" r="4.2"><stop offset="0" stop-color="#dadada"/><stop offset="0.35" stop-color="#dadada"/><stop offset="1" stop-color="#dadada00"/></radialGradient><linearGradient id="gL1l" gradientUnits="userSpaceOnUse" x1="504.2" y1="330.8" x2="543.1" y2="295.6"><stop offset="0" stop-color="#4e4e4e"/><stop offset="0.3" stop-color="#5c5c5c"/><stop offset="0.48" stop-color="#606060"/><stop offset="0.75" stop-color="#505050"/><stop offset="1" stop-color="#3e3e3e"/></linearGradient><linearGradient id="gL2" gradientUnits="userSpaceOnUse" x1="462.9" y1="341.9" x2="493" y2="381"><stop offset="0" stop-color="#5a5a5a"/><stop offset="0.08" stop-color="#6a6a6a"/><stop offset="0.3" stop-color="#676767"/><stop offset="0.45" stop-color="#5f5f5f"/><stop offset="0.6" stop-color="#555555"/><stop offset="0.72" stop-color="#444444"/><stop offset="0.85" stop-color="#343434"/><stop offset="1" stop-color="#2e2e2e"/></linearGradient><radialGradient id="gH4" gradientUnits="userSpaceOnUse" cx="462.8" cy="363.7" r="4.2"><stop offset="0" stop-color="#dcdcdc"/><stop offset="0.35" stop-color="#dcdcdc"/><stop offset="1" stop-color="#dcdcdc00"/></radialGradient><linearGradient id="gL2b" gradientUnits="userSpaceOnUse" x1="440" y1="370" x2="470" y2="400"><stop offset="0" stop-color="#616161"/><stop offset="1" stop-color="#474747"/></linearGradient><linearGradient id="gL4" gradientUnits="userSpaceOnUse" x1="435" y1="400" x2="470" y2="440"><stop offset="0" stop-color="#626262"/><stop offset="0.5" stop-color="#545454"/><stop offset="1" stop-color="#3a3a3a"/></linearGradient><linearGradient id="gL3" gradientUnits="userSpaceOnUse" x1="395" y1="380" x2="440" y2="415"><stop offset="0" stop-color="#666666"/><stop offset="0.4" stop-color="#5a5a5a"/><stop offset="1" stop-color="#404040"/></linearGradient><radialGradient id="gH5" gradientUnits="userSpaceOnUse" cx="410.3" cy="389.4" r="4.0"><stop offset="0" stop-color="#b4b4b4"/><stop offset="0.35" stop-color="#b4b4b4"/><stop offset="1" stop-color="#b4b4b400"/></radialGradient><linearGradient id="gL6" gradientUnits="userSpaceOnUse" x1="405" y1="440" x2="450" y2="470"><stop offset="0" stop-color="#616161"/><stop offset="0.5" stop-color="#535353"/><stop offset="1" stop-color="#3f3f3f"/></linearGradient><linearGradient id="gL5" gradientUnits="userSpaceOnUse" x1="391.4" y1="0" x2="437.1" y2="0"><stop offset="0" stop-color="#4e4e4e"/><stop offset="0.36" stop-color="#5c5c5c"/><stop offset="0.52" stop-color="#868686"/><stop offset="0.57" stop-color="#a0a0a0"/><stop offset="0.63" stop-color="#787878"/><stop offset="0.76" stop-color="#5a5a5a"/><stop offset="1" stop-color="#484848"/></linearGradient><linearGradient id="gL5c" gradientUnits="userSpaceOnUse" x1="406" y1="0" x2="433" y2="0"><stop offset="0" stop-color="#626262"/><stop offset="0.45" stop-color="#767676"/><stop offset="1" stop-color="#626262"/></linearGradient><linearGradient id="gL7" gradientUnits="userSpaceOnUse" x1="369" y1="0" x2="415" y2="0"><stop offset="0" stop-color="#aaaaaa"/><stop offset="0.4" stop-color="#a0a0a0"/><stop offset="0.55" stop-color="#8e8e8e"/><stop offset="0.75" stop-color="#7c7c7c"/><stop offset="1" stop-color="#666666"/></linearGradient></defs>
<g id="ground">
<polygon points="208,519.6 718,365 1077,482 1077,551 557,709 208,594.5" fill="#565656" stroke="#565656" stroke-width="0.7" stroke-linejoin="round"/>
<polygon points="208,594.5 557,709 557,733.6 208,619.4" fill="#585858" stroke="#585858" stroke-width="0.7" stroke-linejoin="round"/>
<polygon points="557,709 1077,551 1077,575 557,733.6" fill="#3b3b3b" stroke="#3b3b3b" stroke-width="0.7" stroke-linejoin="round"/>
</g>
<g id="boxR">
<polygon points="857.8,352.5 898.3,339.6 976.4,364.5 935.3,378.4" fill="#22008a" stroke="#22008a" stroke-width="0.7" stroke-linejoin="round"/>
<polygon points="857.8,352.5 935.3,378.4 943,477 865.6,451.5" fill="#22008a" stroke="#22008a" stroke-width="0.7" stroke-linejoin="round"/>
<polygon points="935.3,378.4 976.4,364.5 985,464 943,477" fill="#1a0060" stroke="#1a0060" stroke-width="0.7" stroke-linejoin="round"/>
</g>
<g id="green">
<polygon points="651,556.3 774,518.5 931.6,569.8 807,607.5" fill="#008a20" stroke="#008a20" stroke-width="0.7" stroke-linejoin="round"/>
<polygon points="651,556.3 807,607.5 808.6,632 651.5,580.8" fill="#008b20" stroke="#008b20" stroke-width="0.7" stroke-linejoin="round"/>
<polygon points="807,607.5 931.6,569.8 933.7,593.4 808.6,632" fill="#006219" stroke="#006219" stroke-width="0.7" stroke-linejoin="round"/>
</g>
<g id="robot">
<polygon points="547.6,418.8 575.2,431.3 612.8,450.1 650.4,472.7 670.4,487.7 642.9,497.7 635.3,487.7 600.3,467.7 557.6,442.6 547.6,430.1" fill="url(#gRFt)"/>
<polygon points="553.9,436.3 557.6,442.6 600.3,467.7 635.3,487.7 642.9,497.7 644.1,511.5 596.5,497.7 596.5,486.5 575.2,462.7" fill="url(#gRFi)"/>
<polygon points="642.9,497.7 670.4,489.0 672.9,500.3 644.1,511.5" fill="#707070" stroke="#707070" stroke-width="0.7" stroke-linejoin="round"/>
<path d="M643.4,499.7 L670.7,490.7" fill="none" stroke="#7a7a7a" stroke-width="2.2"/>
<polygon points="465.2,456.4 510.4,446.4 547.9,431.4 560.5,443.9 594.3,486.5 596.8,489.0 555.5,495.3 532.9,504.0 517.9,495.3 480.3,472.7" fill="url(#gSk)"/>
<polygon points="532.9,504.0 555.5,495.3 596.8,489.0 596.8,500.3 550.5,512.8" fill="#656565" stroke="#656565" stroke-width="0.7" stroke-linejoin="round"/>
<path d="M533.4,505.0 L555.5,496.5 L596.8,490.3" fill="none" stroke="#7b7b7b" stroke-width="2.4"/>
<polygon points="383.8,472.7 415.1,465.2 445.2,453.9 452.7,456.4 520.4,530.4 525.4,546.6 383.8,505.3" fill="url(#gLFl)"/>
<polygon points="452.7,456.4 465.2,456.4 480.3,472.7 517.9,495.3 532.9,504.0 545.4,516.6 554.2,526.6 520.4,530.4" fill="url(#gLFr)"/>
<polygon points="520.4,530.4 554.2,526.6 558.0,536.6 525.4,546.6" fill="#787878" stroke="#787878" stroke-width="0.7" stroke-linejoin="round"/>
<path d="M521.1,531.9 L554.7,528.1" fill="none" stroke="#8e8e8e" stroke-width="2.6"/>
<path d="M465.2,456.4 L480.3,472.7 L517.9,495.3 L532.9,504.0" fill="none" stroke="#c6c6c6" stroke-width="0.8"/>
<path d="M452.7,456.4 L520.4,530.4 L554.2,526.6" fill="none" stroke="#bcbcbc" stroke-width="0.7"/>
<path d="M557.6,442.6 L600.3,467.7 L635.3,487.7 L642.9,497.7" fill="none" stroke="#c0c0c0" stroke-width="0.8"/>
<polygon points="398.5,349 480,362 480,456 400,440" fill="#9f9f9f" stroke="#9f9f9f" stroke-width="0.7" stroke-linejoin="round"/>
<path d="M398.7 349V385" stroke="#b0b0b0" stroke-width="0.8" fill="none"/>
<polygon points="470,368 541.5,357 545.4,390 548,428 535,437.5 510,446.4 487,453 462.7,456.4 440,456 440,420" fill="url(#gCol)"/>
<g clip-path="url(#cTor)">
<path d="M397.6 350.3C394.9 344.0 394.9 342.5 392.6 327.8C390.3 313.1 389.5 306.9 388.8 295.2C388.1 283.5 388.4 289.6 390.1 283.9C391.8 278.2 391.1 278.2 395.1 273.9C399.1 269.6 397.1 271.9 405.1 267.6C413.1 263.3 414.4 262.3 425.1 257.6C435.8 252.9 434.5 253.6 445.2 250.1C455.9 246.6 455.8 246.5 465.2 244.6C474.6 242.7 473.6 243.4 480.3 243.1C487.0 242.8 482.3 241.8 490.3 243.3C498.3 244.8 499.0 245.3 510.4 248.8C521.8 252.3 520.9 252.3 532.9 256.3C544.9 260.3 545.5 260.4 555.5 263.9C565.5 267.4 561.8 264.4 570.5 269.4C579.2 274.4 581.3 273.8 588.0 282.7C594.7 291.6 593.6 290.0 595.6 302.7C597.6 315.4 599.0 319.6 595.6 330.3C592.2 341.0 590.4 337.5 583.0 342.8C575.6 348.1 576.7 347.0 568.0 350.3C559.3 353.6 557.2 353.6 550.5 355.3C543.8 357.0 553.6 355.2 542.9 356.6C532.2 358.0 528.4 358.1 510.4 360.4C492.4 362.7 493.4 365.4 475.3 365.4C457.2 365.4 457.4 362.7 442.7 360.4C428.0 358.1 430.8 358.9 420.1 356.6C409.4 354.3 408.6 353.3 402.6 351.6C396.6 349.9 400.3 356.6 397.6 350.3Z" fill="url(#gTop)"/>
<g filter="url(#fB)">
<polygon points="380,267.0 610,300.6 610,302.4 380,271.3" fill="#9a9a9a"/>
<polygon points="380,270.8 610,301.9 610,304.5 380,277.8" fill="#989898"/>
<polygon points="380,277.3 610,304.0 610,307.2 380,286.4" fill="#969696"/>
<polygon points="380,285.9 610,306.7 610,310.0 380,295.0" fill="#959595"/>
<polygon points="380,294.5 610,309.5 610,313.1 380,304.6" fill="#949494"/>
<polygon points="380,304.1 610,312.6 610,316.3 380,314.3" fill="#939393"/>
<polygon points="380,313.8 610,315.8 610,320.1 380,326.1" fill="#8f8f8f"/>
<polygon points="380,325.6 610,319.6 610,323.9 380,337.9" fill="#8b8b8b"/>
<polygon points="380,337.4 610,323.4 610,326.3 380,345.4" fill="#939393"/>
<polygon points="380,344.9 610,325.8 610,328.1 380,350.8" fill="#888888"/>
<polygon points="380,350.3 610,327.6 610,336.4 380,376.6" fill="#7e7e7e"/>
<polygon points="380,263.8 575,316.5 575,326.7 380,266.3" fill="url(#gW0)"/>
<polygon points="380,265.8 575,326.2 575,341.4 380,269.2" fill="url(#gW1)"/>
<polygon points="380,268.7 575,340.9 575,358.5 380,272.7" fill="url(#gW2)"/>
<polygon points="380,272.2 575,358.0 575,378.0 380,276.6" fill="url(#gW3)"/>
<polygon points="380,276.1 575,377.5 575,402.4 380,281.5" fill="url(#gW4)"/>
<polygon points="498,267 578,279 578,293 498,282" fill="url(#gRE)"/>
<path d="M388.8 295.2C389.1 292.2 388.4 289.6 390.1 283.9C391.8 278.2 391.1 278.2 395.1 273.9C399.1 269.6 397.1 271.9 405.1 267.6C413.1 263.3 414.4 262.3 425.1 257.6C435.8 252.9 434.5 253.6 445.2 250.1C455.9 246.6 455.8 246.5 465.2 244.6C474.6 242.7 473.6 243.4 480.3 243.1C487.0 242.8 482.3 241.8 490.3 243.3C498.3 244.8 499.0 245.3 510.4 248.8C521.8 252.3 520.9 252.3 532.9 256.3C544.9 260.3 545.5 260.4 555.5 263.9C565.5 267.4 566.5 267.9 570.5 269.4" fill="none" stroke="#828282" stroke-width="1.6"/>
<path d="M397.6 350.3C396.3 344.3 394.9 342.5 392.6 327.8C390.3 313.1 389.5 306.9 388.8 295.2C388.1 283.5 388.4 289.6 390.1 283.9C391.8 278.2 393.8 276.6 395.1 273.9" fill="none" stroke="#787878" stroke-width="2.4"/>
</g></g>
<path d="M541.0 357.7C541.0 359.2 547.5 355.5 551.9 354.5C556.3 353.5 562.7 353.6 567.4 351.9C572.1 350.2 576.0 347.0 580.3 344.2C584.6 341.4 589.8 337.7 593.2 335.2C596.7 332.7 601.4 330.5 601.0 329.4C600.6 328.3 594.1 328.6 590.6 328.7C587.1 328.8 583.7 329.4 580.3 330.0C576.9 330.6 573.4 331.5 570.0 332.6C566.6 333.7 562.7 334.4 559.7 336.5C556.7 338.6 555.0 342.0 551.9 345.5C548.8 349.0 541.0 356.2 541.0 357.7Z" fill="url(#gUnd)"/>
<path d="M543.2 358.7C542.2 357.6 540.8 353.2 542.4 350.1C544.0 347.0 549.2 342.9 552.7 339.8C556.2 336.7 558.6 333.5 563.1 331.7C567.6 329.9 576.3 328.2 580.0 328.8C583.7 329.4 585.2 333.8 585.2 335.4C585.2 337.0 583.0 336.4 580.0 338.6C577.0 340.8 572.8 345.7 567.5 348.7C562.2 351.7 552.3 355.1 548.3 356.8C544.2 358.5 544.2 359.8 543.2 358.7Z" fill="url(#gUnd2)"/>
<path d="M578.7 271.0C574.1 271.3 573.6 271.9 571.0 274.2C568.4 276.5 567.0 279.1 565.8 282.6C564.6 286.1 564.8 287.7 565.2 291.6C565.6 295.5 566.0 297.8 567.7 301.9C569.4 306.0 570.5 308.2 573.5 312.3C576.5 316.4 578.5 319.3 582.6 322.6C586.7 325.9 590.1 327.7 594.2 329.0C598.3 330.3 600.0 330.3 603.2 329.0C606.4 327.7 608.1 325.9 610.3 322.6C612.5 319.3 613.3 316.7 614.2 312.3C615.1 307.9 615.2 305.0 614.8 300.6C614.4 296.2 613.8 294.2 612.3 290.3C610.8 286.4 610.7 284.8 607.1 281.3C603.5 277.8 599.9 275.0 594.2 272.9C588.5 270.8 583.3 270.7 578.7 271.0Z" fill="url(#gR1)"/>
<path d="M587.7 277.4C589.2 275.7 591.4 275.2 594.2 275.5C597.0 275.8 599.1 276.8 601.9 278.7C604.7 280.6 606.3 282.4 608.4 285.2C610.5 288.0 612.0 290.6 612.3 292.9C612.6 295.2 612.0 294.9 609.7 296.8C607.4 298.7 603.4 301.8 600.6 302.6C597.8 303.4 597.8 302.8 595.5 300.6C593.2 298.4 590.8 294.9 589.0 291.6C587.2 288.3 586.8 286.7 586.5 283.9C586.2 281.1 586.2 279.1 587.7 277.4Z" fill="url(#gR1h)"/>
<path d="M593.3 252.7C593.8 249.8 594.4 248.6 597.9 245.3C601.4 242.0 605.6 239.0 610.8 236.1C616.0 233.2 619.6 231.8 623.7 230.6C627.8 229.4 627.8 229.5 631.1 230.2C634.4 230.9 637.0 231.9 640.3 234.2C643.6 236.5 645.7 238.3 647.7 241.6C649.7 244.9 648.8 245.6 650.5 250.8C652.2 256.0 656.6 262.2 656.0 267.4C655.4 272.6 651.9 272.9 647.7 276.6C643.5 280.3 639.6 282.6 634.8 285.9C630.0 289.2 627.9 291.4 623.7 293.2C619.5 295.0 616.9 296.6 613.6 295.1C610.3 293.6 609.9 290.7 607.1 285.9C604.3 281.1 602.2 276.3 599.8 271.1C597.4 265.9 596.5 263.7 595.2 260.0C593.9 256.3 592.8 255.6 593.3 252.7Z" fill="url(#gR3)"/>
<path d="M594.2 251.8C594.4 248.6 598.3 245.6 601.6 242.5C604.9 239.4 605.6 238.6 610.8 236.1C616.0 233.6 621.9 230.8 627.4 230.2C632.9 229.6 635.4 231.7 638.5 233.3C641.6 234.9 645.3 235.5 643.1 238.3C640.9 241.1 633.9 243.9 627.4 247.1C620.9 250.3 616.1 252.2 610.8 254.5C605.5 256.8 604.0 259.1 600.7 258.6C597.4 258.1 594.0 255.0 594.2 251.8Z" fill="url(#gR3c)"/>
<path d="M599.8 302.4C601.3 299.1 604.2 296.5 610.8 293.2C617.4 289.9 624.4 291.4 632.9 285.9C641.4 280.4 646.9 267.8 653.2 265.6C659.5 263.4 660.8 270.4 664.3 274.8C667.8 279.2 669.4 283.5 670.7 287.7C672.0 291.9 672.7 291.9 670.7 296.0C668.7 300.1 666.3 303.8 660.6 308.0C654.9 312.2 648.8 314.8 642.2 317.2C635.6 319.6 632.9 320.0 627.4 320.0C621.9 320.0 619.3 319.2 614.5 317.2C609.7 315.2 606.4 312.8 603.5 309.8C600.6 306.8 598.3 305.7 599.8 302.4Z" fill="url(#gR2)"/>
<path d="M606.2 300.6C609.7 299.0 616.5 296.6 623.7 292.5C630.9 288.4 636.3 284.4 642.2 280.0C648.1 275.6 651.0 272.3 653.2 270.4" fill="none" stroke="#6a6a6a" stroke-width="3.2" stroke-linecap="round"/>
<path d="M605.3 299.1C609.0 297.5 616.3 295.2 623.7 291.0C631.1 286.8 636.5 282.5 642.2 278.1C647.9 273.7 650.3 270.7 652.3 268.9" fill="none" stroke="#7c7c7c" stroke-width="0.8" stroke-linecap="round"/>
<path d="M614.8 290.6C617.9 289.2 624.6 286.8 630.3 283.4C636.0 280.0 638.6 277.4 643.2 273.8C647.8 270.2 651.3 267.0 653.3 265.3" fill="none" stroke="#2e2e2e" stroke-width="1.4" stroke-linecap="round"/>
<path d="M647.7 241.6C649.7 237.9 654.3 237.2 660.6 232.4C666.9 227.6 672.7 222.2 679.0 217.6C685.3 213.0 688.2 210.1 691.9 209.4C695.6 208.7 694.5 210.9 697.5 214.0C700.5 217.1 703.0 220.2 706.7 225.0C710.4 229.8 713.3 232.7 715.9 237.9C718.5 243.1 720.3 246.2 719.6 250.8C718.9 255.4 716.6 257.7 712.2 261.0C707.8 264.3 703.4 264.8 697.5 267.4C691.6 270.0 687.9 272.4 682.7 273.9C677.5 275.4 675.8 275.7 671.7 274.8C667.6 273.9 666.1 271.5 662.4 269.3C658.7 267.1 655.6 267.4 653.2 263.7C650.8 260.0 651.6 255.2 650.5 250.8C649.4 246.4 645.7 245.3 647.7 241.6Z" fill="url(#gR4)"/>
<circle cx="691.0" cy="230.9" r="4.5" fill="url(#gH1)" opacity="0.75"/>
<path d="M691.9 209.4C693.0 207.5 698.9 205.0 703.0 204.4C707.1 203.8 709.6 204.3 712.2 206.6C714.8 208.9 712.9 210.3 715.9 215.8C718.9 221.3 723.9 228.7 727.0 234.2C730.1 239.7 732.0 240.5 731.6 243.5C731.2 246.5 727.5 247.5 725.1 249.0C722.7 250.5 721.4 253.0 719.6 250.8C717.8 248.6 718.5 243.1 715.9 237.9C713.3 232.7 710.4 229.8 706.7 225.0C703.0 220.2 700.5 217.1 697.5 214.0C694.5 210.9 690.8 211.3 691.9 209.4Z" fill="url(#gR5)"/>
<path d="M694.7 209.9C696.4 212.2 699.5 216.1 703.0 221.3C706.5 226.5 709.1 230.4 712.2 236.1C715.3 241.8 717.4 247.1 718.7 249.9" fill="none" stroke="#393939" stroke-width="0.9" stroke-linecap="round"/>
<path d="M718.3 221.3C720.3 221.3 726.1 229.5 730.5 232.2C734.9 234.9 736.6 234.7 740.2 234.7C743.8 234.7 746.3 230.5 748.7 232.2C751.1 233.9 750.4 238.4 752.4 243.2C754.4 248.0 759.7 253.8 758.5 256.0C757.3 258.2 750.7 255.8 746.3 254.2C741.9 252.6 739.9 250.8 736.5 248.1C733.1 245.4 732.4 244.0 729.2 240.8C726.0 237.6 722.9 236.1 720.7 232.2C718.5 228.3 716.3 221.3 718.3 221.3Z" fill="#3c3c3c"/>
<path d="M710.1 232.9C710.6 231.4 714.2 235.9 718.4 237.5C722.6 239.1 727.6 239.6 731.1 241.1C734.6 242.6 735.5 243.2 735.7 244.8C735.9 246.4 735.0 247.7 732.1 248.9C729.2 250.1 724.3 251.5 721.1 250.7C717.9 249.9 718.3 248.4 716.1 244.8C713.9 241.2 709.6 234.4 710.1 232.9Z" fill="#3c3c3c"/>
<path d="M702.4 218.8C702.8 219.6 703.5 221.1 704.5 222.9C705.5 224.7 706.8 226.7 707.4 227.6" fill="none" stroke="#888888" stroke-width="2.0" stroke-linecap="round"/>
<path d="M730.8 234.9C731.0 234.1 732.5 236.8 734.8 237.5C737.1 238.2 739.5 238.7 742.1 238.4C744.7 238.1 746.4 236.1 748.0 236.1C749.6 236.1 750.4 237.2 750.3 238.4C750.2 239.6 749.6 241.0 747.6 242.1C745.6 243.2 743.0 244.0 740.3 243.9C737.6 243.8 735.8 243.4 733.9 241.6C732.0 239.8 730.6 235.7 730.8 234.9Z" fill="#8a8a8a"/>
<path d="M712.2 205.5C712.0 201.6 711.9 199.4 713.4 195.7C714.9 192.0 716.3 189.8 719.5 187.2C722.7 184.6 725.1 183.9 729.2 182.9C733.3 181.9 735.8 181.9 740.2 182.3C744.6 182.7 747.1 183.0 751.2 184.7C755.3 186.4 756.5 187.4 760.9 190.8C765.3 194.2 772.6 197.9 773.1 201.8C773.6 205.7 767.2 206.9 763.3 210.3C759.4 213.7 757.0 215.4 753.6 218.8C750.2 222.2 747.5 224.4 746.3 227.4C745.1 230.4 748.9 232.2 747.7 233.7C746.5 235.2 743.6 234.9 740.2 234.9C736.8 234.9 734.2 235.2 730.5 233.5C726.8 231.8 725.1 229.9 721.9 226.2C718.7 222.5 716.5 219.3 714.6 215.2C712.7 211.1 712.4 209.4 712.2 205.5Z" fill="url(#gR6)"/>
<path d="M712.8 205.5C712.6 201.5 712.0 199.8 713.6 195.7C715.2 191.6 716.1 190.4 719.5 187.8C722.9 185.2 724.3 185.1 728.0 184.7C731.7 184.3 733.3 183.7 735.3 186.0C737.3 188.3 737.1 189.9 736.5 194.5C735.9 199.1 735.4 200.9 732.9 205.5C730.4 210.1 729.0 211.5 725.6 214.0C722.2 216.5 720.9 216.7 718.3 216.4C715.7 216.1 715.9 215.3 714.6 212.8C713.3 210.3 713.0 209.5 712.8 205.5Z" fill="#666666" opacity="0.8"/>
<path d="M746.3 227.4C747.5 224.4 750.2 222.2 753.6 218.8C757.0 215.4 759.4 213.7 763.3 210.3C767.2 206.9 768.7 200.8 773.1 201.8C777.5 202.8 780.7 209.8 785.3 215.2C789.9 220.6 792.6 223.5 796.2 228.6C799.8 233.7 801.7 236.9 803.5 240.8C805.3 244.7 804.7 244.5 805.0 248.1C805.3 251.7 808.9 257.8 805.0 259.0C801.1 260.2 790.7 255.4 785.3 254.2C779.9 253.0 781.2 252.8 778.0 253.0C774.8 253.2 772.1 253.4 769.4 255.4C766.7 257.4 767.0 262.9 764.6 262.9C762.2 262.9 759.9 259.3 757.2 255.4C754.5 251.5 753.1 247.5 751.2 243.2C749.3 238.9 748.7 236.9 747.7 233.7C746.7 230.5 745.1 230.4 746.3 227.4Z" fill="url(#gR7)"/>
<path d="M764.6 235.9C766.3 233.8 772.1 231.9 775.5 232.2C778.9 232.5 780.9 235.0 779.2 237.1C777.5 239.2 771.6 241.7 768.2 241.4C764.8 241.1 762.9 238.0 764.6 235.9Z" fill="#8a8a8a" opacity="0.8"/>
<path d="M746.5 227.4C747.9 225.7 750.2 222.5 753.6 219.1C757.0 215.7 759.5 214.0 763.3 210.6C767.1 207.2 770.9 204.0 772.8 202.3" fill="none" stroke="#484848" stroke-width="0.9" stroke-linecap="round"/>
<path d="M763.5 263.8C764.6 259.5 765.2 257.6 768.8 255.2C772.4 252.8 777.3 252.0 781.6 252.0C785.9 252.0 785.4 254.1 790.1 255.2C794.8 256.3 800.2 254.4 805.1 257.4C810.0 260.4 812.2 265.4 814.7 270.1C817.2 274.8 817.6 276.1 817.4 280.8C817.2 285.5 815.9 289.8 813.6 293.6C811.3 297.4 808.7 299.6 806.1 300.0C803.5 300.4 802.7 297.8 800.8 295.7C798.9 293.6 799.1 291.4 796.5 289.3C793.9 287.2 792.3 285.7 788.0 285.1C783.7 284.5 779.9 284.4 775.2 286.1C770.5 287.8 766.9 295.5 764.6 293.6C762.3 291.7 763.7 282.5 763.5 276.5C763.3 270.5 762.4 268.1 763.5 263.8Z" fill="url(#gR8)"/>
<path d="M769.4 256.4C769.7 254.3 770.2 254.2 773.1 253.0C776.0 251.8 777.1 251.7 780.4 252.0C783.7 252.3 784.3 252.3 785.3 254.2C786.3 256.1 785.9 257.0 784.0 259.0C782.1 261.0 781.2 261.2 778.0 261.7C774.8 262.2 774.2 262.3 771.9 260.9C769.6 259.5 769.1 258.5 769.4 256.4Z" fill="#6c6c6c"/>
<path d="M785.9 260.6C786.8 258.5 799.3 257.6 805.1 259.5C810.9 261.4 813.9 265.8 814.7 270.1C815.5 274.4 812.1 280.8 809.3 280.8C806.5 280.8 805.5 274.1 800.8 270.1C796.1 266.1 785.0 262.7 785.9 260.6Z" fill="#4a4a4a"/>
<path d="M756.0 317.5C755.5 316.5 755.5 316.0 756.4 312.9C757.3 309.8 758.6 305.8 760.5 302.0C762.4 298.2 763.4 296.8 766.0 293.7C768.6 290.6 770.4 288.4 773.3 286.4C776.2 284.4 777.5 284.1 780.6 283.7C783.7 283.3 785.7 283.7 788.8 284.6C791.9 285.5 793.7 286.5 796.1 288.3C798.5 290.1 799.2 291.3 800.7 293.7C802.2 296.1 802.9 297.2 803.4 300.1C803.9 303.0 803.5 304.9 803.0 308.4C802.5 311.9 802.1 314.6 800.7 317.5C799.3 320.4 798.5 320.8 796.1 323.0C793.7 325.2 791.0 326.9 788.8 328.4C786.6 329.9 786.1 331.2 785.2 330.3C784.3 329.4 786.9 325.9 784.3 323.9C781.7 321.9 777.5 321.4 772.4 320.2C767.3 319.0 762.0 318.4 758.7 317.9C755.4 317.4 756.5 318.5 756.0 317.5Z" fill="url(#gR9)"/>
<path d="M796.1 288.3C796.7 287.6 799.2 291.3 800.7 293.7C802.2 296.1 802.9 297.2 803.4 300.1C803.9 303.0 803.5 304.9 803.0 308.4C802.5 311.9 802.1 314.6 800.7 317.5C799.3 320.4 798.5 320.8 796.1 323.0C793.7 325.2 790.4 328.8 788.8 328.4C787.2 328.0 787.2 324.2 787.9 321.1C788.6 318.0 790.9 316.2 792.5 312.9C794.1 309.6 795.1 307.8 796.1 304.7C797.1 301.6 797.5 300.7 797.5 297.4C797.5 294.1 795.5 289.0 796.1 288.3Z" fill="url(#gR9s)"/>
<path d="M766.5 294.2C767.5 295.9 769.4 302.8 772.4 304.7C775.4 306.6 780.9 307.0 784.3 305.8C787.7 304.6 791.5 298.8 792.9 297.4" fill="none" stroke="#a0a0a0" stroke-width="0.9" stroke-linecap="round"/>
<circle cx="776.1" cy="306.3" r="4" fill="url(#gH2)" opacity="0.6"/>
<polygon points="756.0,317.5 758.7,317.9 772.4,320.2 784.3,323.9 785.6,329.8 781.5,328.4 772.4,324.8 757.8,322.1" fill="#9c9c9c" stroke="#9c9c9c" stroke-width="0.7" stroke-linejoin="round"/>
<polygon points="758.7,318.9 772.4,321.0 783.8,324.8 784.3,328.4 772.4,325.0 759.2,321.1" fill="#707070" stroke="#707070" stroke-width="0.7" stroke-linejoin="round"/>
<polygon points="758.7,318.4 772.4,320.7 774.2,323.4 784.3,324.3 784.3,328.4 775.1,327.5 771.5,333.9 764.6,338.5 761.0,337.6 760.1,333.0 763.3,323.9 759.2,321.1" fill="#0a00b4" stroke="#0a00b4" stroke-width="0.7" stroke-linejoin="round"/>
<polygon points="764.6,323.9 771.5,323.4 770.6,332.1 765.1,337.1 762.4,335.8" fill="#1818d0" stroke="#1818d0" stroke-width="0.7" stroke-linejoin="round"/>
<path d="M542.2 293.6C542.9 292.1 546.8 293.6 549.6 296.4C552.4 299.2 554.3 303.4 556.0 307.4C557.7 311.4 558.4 314.4 557.9 316.6C557.4 318.8 555.7 321.1 553.3 318.5C550.9 315.9 548.1 308.7 545.9 303.7C543.7 298.7 541.5 295.1 542.2 293.6Z" fill="#373737"/>
<path d="M483.2 302.8C483.6 299.5 483.9 298.4 486.9 294.5C489.9 290.6 492.8 287.4 498.0 283.5C503.2 279.6 507.7 276.6 512.7 275.2C517.7 273.8 518.8 274.8 522.9 276.5C527.0 278.2 528.8 280.0 533.0 283.5C537.2 287.0 542.3 290.8 544.1 294.1C545.9 297.4 545.9 295.9 542.2 300.0C538.5 304.1 532.2 308.7 525.6 314.8C519.0 320.9 514.2 326.6 509.0 330.5C503.8 334.4 503.5 336.5 499.8 334.1C496.1 331.7 493.5 323.1 490.6 318.5C487.7 313.9 486.6 314.2 485.1 311.1C483.6 308.0 482.8 306.1 483.2 302.8Z" fill="url(#gL1u)"/>
<path d="M483.5 301.5C484.2 298.9 485.2 297.6 488.4 294.2C491.6 290.8 494.8 288.1 499.4 284.5C504.0 280.9 507.6 277.8 511.5 276.0C515.4 274.2 515.9 274.9 518.8 275.4C521.7 275.9 525.7 277.4 526.2 278.4C526.7 279.4 524.2 279.6 521.3 280.2C518.4 280.8 515.5 279.6 511.5 281.4C507.5 283.2 505.3 286.0 501.2 289.4C497.1 292.8 493.6 295.1 490.8 298.5C488.0 301.9 488.4 304.7 487.2 306.4C486.0 308.1 485.4 308.0 484.7 307.0C484.0 306.0 482.8 304.1 483.5 301.5Z" fill="#6e6e6e" opacity="0.45"/>
<circle cx="501.2" cy="293.6" r="4.2" fill="url(#gH3)" opacity="0.75"/>
<path d="M507.0 339.1C505.7 336.3 500.1 336.9 503.3 331.7C506.5 326.5 516.3 319.3 523.2 313.3C530.1 307.3 533.3 304.3 538.0 301.5C542.7 298.7 542.7 296.7 546.8 299.3C550.9 301.9 554.8 309.0 558.6 314.7C562.4 320.4 564.4 324.2 566.0 328.0C567.6 331.8 568.0 330.9 566.8 333.9C565.6 336.9 564.4 338.7 560.1 342.8C555.8 346.9 550.7 350.9 545.4 354.6C540.1 358.3 537.4 360.0 533.6 361.2C529.8 362.4 529.7 361.2 526.2 360.5C522.7 359.8 519.1 360.5 515.9 357.5C512.7 354.5 511.8 349.4 510.0 345.7C508.2 342.0 508.3 341.9 507.0 339.1Z" fill="url(#gL1l)"/>
<path d="M521.9 315.5C523.0 313.3 525.7 310.7 527.4 311.3C529.1 311.9 530.2 315.2 530.4 318.6C530.6 322.0 529.9 326.2 528.6 328.3C527.3 330.4 525.0 330.1 523.7 328.9C522.4 327.7 522.3 324.9 521.9 322.2C521.5 319.5 520.8 317.7 521.9 315.5Z" fill="#8c8c8c" opacity="0.7"/>
<path d="M527.4 361.2C530.8 360.5 535.2 357.5 540.8 353.9C546.4 350.3 550.3 347.1 555.4 343.0C560.5 338.9 564.3 336.6 566.4 333.2C568.5 329.8 566.9 325.9 565.7 325.9C564.5 325.9 563.8 329.5 560.3 333.2C556.8 336.9 553.0 340.3 548.1 344.2C543.2 348.1 540.8 350.0 535.9 352.7C531.0 355.4 525.4 355.9 523.7 357.6C522.0 359.3 524.0 361.9 527.4 361.2Z" fill="#3c3c3c" opacity="0.85"/>
<path d="M506.1 339.3C504.6 336.0 502.4 334.8 504.2 331.4C506.0 328.0 511.3 324.5 515.2 322.2C519.1 319.9 520.3 319.8 523.7 319.8C527.1 319.8 532.2 319.5 532.2 322.2C532.2 324.9 527.1 329.0 523.7 333.2C520.3 337.4 517.6 340.1 515.2 343.0C512.8 345.9 513.3 348.5 511.5 347.8C509.7 347.1 507.6 342.6 506.1 339.3Z" fill="#6e6e6e" opacity="0.6"/>
<path d="M504.8 329.9C508.2 326.9 515.2 320.4 521.8 314.7C528.4 309.0 534.8 304.1 538.0 301.5" fill="none" stroke="#333333" stroke-width="1.1" stroke-linecap="round"/>
<polygon points="499,333 508,337 516,352 520,362 511,366 498,352" fill="#545454" stroke="#545454" stroke-width="0.7" stroke-linejoin="round"/>
<path d="M442.9 361.9C442.0 359.2 442.9 359.2 445.1 356.0C447.3 352.8 449.5 349.8 453.9 345.7C458.3 341.6 462.2 338.8 467.2 335.4C472.2 332.0 475.5 330.3 479.0 328.8C482.5 327.3 481.4 327.1 484.9 328.0C488.4 328.9 492.4 331.0 496.7 333.2C501.0 335.4 503.6 336.6 506.3 339.1C509.0 341.6 508.7 342.6 510.0 345.7C511.3 348.8 514.4 349.9 512.9 354.6C511.4 359.3 507.0 363.7 502.6 369.3C498.2 374.9 494.9 377.9 490.8 382.6C486.7 387.3 485.1 390.1 481.9 392.9C478.7 395.7 476.8 396.3 474.6 396.6C472.4 396.9 473.3 397.2 470.9 394.4C468.5 391.6 467.1 387.6 462.8 382.6C458.5 377.6 453.5 373.4 449.5 369.3C445.5 365.2 443.8 364.6 442.9 361.9Z" fill="url(#gL2)"/>
<circle cx="462.8" cy="363.7" r="4.2" fill="url(#gH4)" opacity="0.75"/>
<path d="M443.6 362.7C446.3 365.5 451.6 370.5 456.9 376.7C462.2 382.9 467.5 390.3 470.1 393.7" fill="none" stroke="#4b4b4b" stroke-width="0.9" stroke-linecap="round"/>
<path d="M433.3 369.3C434.6 365.8 439.7 361.9 442.9 361.9C446.1 361.9 445.5 365.2 449.5 369.3C453.5 373.4 458.5 377.6 462.8 382.6C467.1 387.6 469.0 391.2 470.9 394.4C472.8 397.6 473.1 397.2 472.4 398.8C471.7 400.4 469.7 402.1 467.2 402.5C464.7 402.9 463.3 402.6 459.8 401.0C456.3 399.4 453.0 396.9 449.5 394.4C446.0 391.9 444.8 391.5 442.1 388.5C439.4 385.5 438.0 383.4 436.2 379.6C434.4 375.8 432.0 372.8 433.3 369.3Z" fill="url(#gL2b)"/>
<path d="M424.6 410.1C426.4 405.2 436.1 394.0 442.3 391.6C448.5 389.2 451.2 395.2 455.6 398.3C460.0 401.4 462.1 403.3 464.5 407.1C466.9 410.9 467.1 413.3 467.4 417.4C467.7 421.5 468.0 423.4 465.9 427.8C463.8 432.2 460.6 435.5 457.1 439.6C453.6 443.7 450.3 448.7 448.2 448.4C446.1 448.1 448.6 441.0 446.8 438.1C445.0 435.2 441.3 436.7 439.4 433.7C437.5 430.7 438.4 426.8 437.2 423.3C436.0 419.8 436.0 418.6 433.5 416.0C431.0 413.4 422.8 415.0 424.6 410.1Z" fill="url(#gL4)"/>
<path d="M392.9 396.8C393.0 393.5 392.9 391.0 395.1 387.9C397.3 384.8 400.2 383.6 404.0 381.3C407.8 379.0 409.6 377.5 414.3 376.2C419.0 374.9 423.2 374.4 427.6 374.7C432.0 375.0 433.5 374.4 436.4 377.6C439.3 380.8 442.9 386.2 442.3 390.9C441.7 395.6 437.0 397.4 433.5 401.2C430.0 405.0 428.1 408.0 424.6 410.1C421.1 412.2 419.3 410.9 415.8 411.5C412.3 412.1 410.1 413.3 406.9 413.0C403.7 412.7 402.1 411.9 399.6 410.1C397.1 408.3 395.7 406.9 394.4 404.2C393.1 401.5 392.8 400.1 392.9 396.8Z" fill="url(#gL3)"/>
<circle cx="410.3" cy="389.4" r="4.0" fill="url(#gH5)" opacity="0.75"/>
<path d="M388.5 429.2C390.6 428.0 397.4 429.2 404.0 429.2C410.6 429.2 414.6 429.2 421.7 429.2C428.8 429.2 434.4 427.4 439.4 429.2C444.4 431.0 445.0 434.3 446.8 438.1C448.6 441.9 450.3 440.1 448.2 448.4C446.1 456.7 440.5 472.5 436.4 479.4C432.3 486.3 431.1 482.5 427.6 483.1C424.1 483.7 422.2 483.9 418.7 482.3C415.2 480.7 410.8 479.1 409.9 475.0C409.0 470.9 413.4 467.0 414.3 461.7C415.2 456.4 415.8 453.1 414.3 448.4C412.8 443.7 411.0 440.8 406.9 438.1C402.8 435.4 397.4 436.9 393.7 435.1C390.0 433.3 386.4 430.4 388.5 429.2Z" fill="url(#gL6)"/>
<path d="M433.5 435.9C436.0 432.5 444.4 436.0 446.8 438.1C449.2 440.2 449.9 441.5 448.2 448.4C446.5 455.3 439.5 473.8 436.4 479.4C433.3 485.0 430.5 485.8 429.8 482.3C429.1 478.9 431.4 466.4 432.0 458.7C432.6 451.0 431.0 439.3 433.5 435.9Z" fill="#424242" opacity="0.7"/>
<path d="M388.2 430.8C387.7 429.6 388.0 428.0 388.7 426.2C389.4 424.4 390.3 423.6 391.9 421.6C393.5 419.6 394.1 418.1 396.9 416.1C399.7 414.1 402.9 412.7 406.0 411.6C409.1 410.5 408.7 410.8 412.4 410.6C416.1 410.4 420.6 410.2 424.3 410.5C428.0 410.8 428.6 410.9 430.7 412.0C432.8 413.1 433.4 414.4 434.8 416.1C436.2 417.8 437.0 418.1 437.6 420.7C438.2 423.3 438.6 426.6 438.0 428.9C437.4 431.2 437.5 431.3 434.8 432.4C432.1 433.5 428.8 434.1 424.3 434.6C419.8 435.1 417.3 435.1 412.4 434.9C407.5 434.7 403.8 434.1 399.6 433.5C395.4 432.9 393.7 432.6 391.4 432.1C389.1 431.6 388.7 432.0 388.2 430.8Z" fill="url(#gL5)"/>
<path d="M406.0 413.4C407.1 412.7 409.3 411.6 412.4 411.2C415.4 410.8 421.2 410.7 424.3 410.9C427.4 411.1 429.2 411.8 430.7 412.5C432.1 413.2 434.1 414.6 433.0 415.2C431.9 415.8 427.7 416.1 424.3 416.3C420.9 416.5 415.5 416.8 412.4 416.6C409.3 416.4 406.9 415.7 405.8 415.2C404.7 414.7 404.9 414.1 406.0 413.4Z" fill="url(#gL5c)"/>
<path d="M388.2 430.8C387.8 430.1 386.8 427.8 388.7 427.6C390.6 427.4 395.7 429.2 399.6 429.8C403.6 430.4 408.3 431.0 412.4 431.2C416.5 431.4 420.1 431.4 424.3 430.8C428.5 430.2 435.5 427.8 437.8 427.6C440.1 427.4 438.5 428.6 438.0 429.4C437.5 430.2 437.1 431.5 434.8 432.4C432.5 433.3 428.0 434.2 424.3 434.6C420.6 435.0 416.5 435.1 412.4 434.9C408.3 434.7 403.1 434.0 399.6 433.5C396.1 433.0 393.3 432.6 391.4 432.1C389.5 431.7 388.6 431.6 388.2 430.8Z" fill="#454545" opacity="0.8"/>
<path d="M388.5 431.1C390.7 431.7 394.8 433.1 399.6 434.0C404.4 434.9 407.5 435.3 412.4 435.5C417.3 435.7 419.5 435.6 424.3 435.1C429.1 434.6 433.8 433.3 436.2 432.8" fill="none" stroke="#2e2e2e" stroke-width="1.2" stroke-linecap="round"/>
<path d="M368.7 446.5C368.5 444.4 370.5 443.5 372.8 441.9C375.1 440.3 376.8 439.9 380.1 438.7C383.4 437.5 385.8 436.7 389.3 436.0C392.8 435.3 394.4 434.8 397.5 435.0C400.6 435.2 402.1 435.4 404.8 436.9C407.5 438.4 409.3 439.8 411.2 442.4C413.1 445.0 413.9 446.8 414.4 449.7C414.9 452.6 414.7 454.1 413.9 457.0C413.1 459.9 412.1 461.9 410.3 464.3C408.5 466.7 407.4 467.3 404.8 468.8C402.2 470.3 400.8 470.8 397.5 471.6C394.2 472.4 391.9 472.9 388.4 472.9C384.9 472.9 381.4 473.1 380.1 471.6C378.8 470.1 382.0 468.3 382.0 465.2C382.0 462.1 381.8 458.7 380.1 456.1C378.4 453.5 376.0 454.3 373.7 452.4C371.4 450.5 368.9 448.6 368.7 446.5Z" fill="url(#gL7)"/>
<path d="M377.4 466.6C379.1 465.3 383.7 465.5 388.4 465.2C393.1 464.9 396.2 466.1 401.1 465.2C406.0 464.3 411.3 460.2 413.0 460.6C414.7 461.0 411.4 465.0 409.4 467.0C407.4 469.0 407.2 469.5 403.0 470.7C398.8 471.9 393.0 473.0 388.4 473.2C383.8 473.4 382.3 473.1 380.1 471.8C377.9 470.5 375.7 467.9 377.4 466.6Z" fill="#5c5c5c" opacity="0.9"/>
<path d="M384.2 455.1C384.7 453.3 387.6 453.0 388.4 454.7C389.2 456.4 389.3 463.4 388.8 465.2C388.3 467.0 386.0 467.3 385.2 465.6C384.4 463.9 383.7 456.9 384.2 455.1Z" fill="#b8b8b8" opacity="0.8"/>
<polygon points="354.1,458.3 358.7,457.7 359.1,472.9 355.5,473.4" fill="#808080" stroke="#808080" stroke-width="0.7" stroke-linejoin="round"/>
<polygon points="353.8,463.8 356.4,463.5 356.6,467.7 354.4,467.9" fill="#0c10c0" stroke="#0c10c0" stroke-width="0.7" stroke-linejoin="round"/>
<polygon points="357.8,448.9 366.9,448.9 368.9,485.3 361.0,485.5" fill="#a80000" stroke="#a80000" stroke-width="0.7" stroke-linejoin="round"/>
<polygon points="366.9,448.4 371.9,448.3 374.7,483.4 368.9,485.1" fill="#620000" stroke="#620000" stroke-width="0.7" stroke-linejoin="round"/>
<polygon points="366.9,457.9 380.6,453.3 381.5,455.6 368.3,461.1" fill="#484848" stroke="#484848" stroke-width="0.7" stroke-linejoin="round"/>
<polygon points="367.4,464.3 372.8,459.7 382.0,456.1 384.7,459.7 383.8,464.3 377.4,466.6 369.2,467.5" fill="#0a00ac" stroke="#0a00ac" stroke-width="0.7" stroke-linejoin="round"/>
<polygon points="371.0,463.4 381.1,458.8 383.3,461.1 380.1,464.3 372.8,465.6" fill="#1c22d2" stroke="#1c22d2" stroke-width="0.7" stroke-linejoin="round"/>
<polygon points="368.3,468.1 387.4,465.2 387.9,466.6 369.6,470.8" fill="#9c9c9c" stroke="#9c9c9c" stroke-width="0.7" stroke-linejoin="round"/>
</g>
<g id="boxL">
<polygon points="311.3,518.6 353.7,507 431.8,533.2 390.3,545.8" fill="#22008a" stroke="#22008a" stroke-width="0.7" stroke-linejoin="round"/>
<polygon points="311.3,518.6 390.3,545.8 398.2,643.8 320.7,617" fill="#22008a" stroke="#22008a" stroke-width="0.7" stroke-linejoin="round"/>
<polygon points="390.3,545.8 431.8,533.2 439.6,631.2 398.2,643.8" fill="#1a0060" stroke="#1a0060" stroke-width="0.7" stroke-linejoin="round"/>
</g>
<g id="triad">
<polygon points="259.4,730.6 274.4,725.8 279.8,726.2 275.1,729.8 264.1,733.1 259.7,732.4" fill="#00c000" stroke="#00c000" stroke-width="0.7" stroke-linejoin="round"/>
<polygon points="256.4,733.1 259.4,731.7 264.1,733.1 272.9,736.8 273.3,738.2 269.2,739.0 260.5,735.7 256.8,734.6" fill="#f00000" stroke="#f00000" stroke-width="0.7" stroke-linejoin="round"/>
<polygon points="255.0,707.9 257.9,711.9 259.6,730.9 256.4,733.1 255.4,728.0" fill="#0000d8" stroke="#0000d8" stroke-width="0.7" stroke-linejoin="round"/>
<text x="255.4" y="707" font-family="Liberation Serif,serif" font-size="11" fill="#2828c8">Z</text>
<text x="281" y="726.6" font-family="Liberation Serif,serif" font-size="9.2" fill="#20c820">Y</text>
<text x="274.6" y="739" font-family="Liberation Serif,serif" font-size="10.5" fill="#e83820">X</text>
</g>
<!--SC-E-->
</svg>
<!--VIEW-E-->

<!-- BOTTOM BAR -->
<!--BOT-S-->
<svg class="abs" style="left:201px;top:785px" width="884" height="36" viewBox="201 785 884 36">
 <defs>
  <radialGradient id="gRB" cx="0.5" cy="0.3" r="0.75"><stop offset="0" stop-color="#ffffff"/><stop offset="0.55" stop-color="#f2f2f2"/><stop offset="0.85" stop-color="#c4c4c4"/><stop offset="1" stop-color="#9c9c9c"/></radialGradient>
  <linearGradient id="gThumb" x1="0" y1="0" x2="1" y2="0"><stop offset="0" stop-color="#f6f6f6"/><stop offset="1" stop-color="#d2d4d8"/></linearGradient>
 </defs>
 <!-- play buttons -->
 <g>
  <circle cx="215" cy="801.8" r="10.2" fill="url(#gRB)" stroke="#8a8a8a" stroke-width="1"/>
  <circle cx="239" cy="801.8" r="10.2" fill="url(#gRB)" stroke="#8a8a8a" stroke-width="1"/>
  <circle cx="265" cy="801.8" r="10.2" fill="url(#gRB)" stroke="#8a8a8a" stroke-width="1"/>
  <circle cx="289" cy="801.8" r="10.2" fill="url(#gRB)" stroke="#8a8a8a" stroke-width="1"/>
  <circle cx="831" cy="801.8" r="10.2" fill="url(#gRB)" stroke="#8a8a8a" stroke-width="1"/>
  <g fill="#1e1e1e">
   <rect x="210" y="798" width="1.4" height="7.6"/><path d="M215.8 798V805.6L211.4 801.8Z"/><path d="M220.4 798V805.6L216 801.8Z"/>
   <path d="M240.4 797.8V805.8L234.6 801.8Z"/><rect x="241.4" y="797.8" width="1.6" height="8"/>
   <path d="M261.8 797V806.6L269.6 801.8Z"/>
   <path d="M287.6 797.8V805.8L293.4 801.8Z"/><rect x="285" y="797.8" width="1.6" height="8"/>
  </g>
  <rect x="826.6" y="797.8" width="8.4" height="6.6" rx="1" fill="#fff" stroke="#1e1e1e" stroke-width="1.6"/>
  <path d="M829.4 803.4H834.4L832 806.6Z" fill="#1e1e1e"/>
  <rect x="828.4" y="799.6" width="4.8" height="3" fill="#3a3a3a"/>
 </g>
 <!-- timeline -->
 <rect x="302" y="791" width="517" height="22" fill="#9aa9c8"/>
 <path d="M302.5 813V791.5H819" fill="none" stroke="#6a6a6a" stroke-width="1"/>
 <path d="M303.5 812V792.5H818" fill="none" stroke="#8490aa" stroke-width="1"/>
 <path d="M302 812.5H818.5V792" fill="none" stroke="#ffffff" stroke-width="1"/>
 <rect x="497" y="791" width="10" height="22" fill="#cdd4df"/><path d="M497.5 812.5V791.5H506" fill="none" stroke="#ffffff" stroke-width="1"/><path d="M506.5 791V812.5H497" fill="none" stroke="#2a2a2a" stroke-width="1"/><path d="M505.5 792V811.5H498" fill="none" stroke="#8e949e" stroke-width="1"/>
 <!-- separators -->
 <rect x="845.5" y="788" width="1" height="28" fill="#a6a6a6"/><rect x="846.5" y="788" width="1" height="28" fill="#fdfdfd"/>
 <rect x="970" y="788" width="1" height="28" fill="#a6a6a6"/><rect x="971" y="788" width="1" height="28" fill="#fdfdfd"/>
 <!-- speed slider -->
 <rect x="901" y="800" width="56" height="1" fill="#1e1e1e"/>
 <path d="M924.5 791.5H933.5V809.5H924.5Z" fill="#f4f4f4"/>
 <path d="M933.5 791V810H924" fill="none" stroke="#3a3a3a" stroke-width="1.2"/>
 <path d="M924.5 809.5V791.5H933" fill="none" stroke="#ffffff" stroke-width="1"/>
 <!-- time input -->
 <rect x="1009.5" y="792.5" width="71" height="19" fill="#fff" stroke="#a9adb6" stroke-width="1"/>
</svg>
<span class="t" style="left:536px;top:795px;color:#e6ecf8;transform:scaleX(0.945);">T = [0,16]</span>
<span class="t" style="left:876px;top:795px;transform:scaleX(0.99);">1X</span>
<span class="t" style="left:979px;top:795px;transform:scaleX(0.965);">Time</span>
<span class="t" style="left:1011.5px;top:795px;transform:scaleX(0.927);">6.153891</span>
<!--BOT-E-->

</body>
</html>
